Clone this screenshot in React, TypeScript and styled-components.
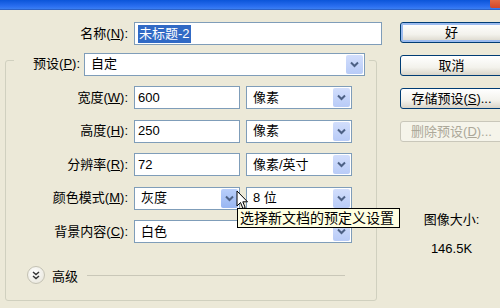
import React from 'react';
import styled, { createGlobalStyle } from 'styled-components';

const GlobalStyle = createGlobalStyle`
  html, body {
    margin: 0;
    padding: 0;
    background: #ece9d8;
    overflow: hidden;
  }
  body {
    font-family: "Liberation Sans", "Noto Sans CJK SC", sans-serif;
    font-size: 13px;
    color: #000;
  }
`;

const Window = styled.div`
  position: relative;
  width: 500px;
  height: 308px;
  overflow: hidden;
  display: flex;
  flex-direction: column;
  background: #ece9d8;
`;

const TitleBar = styled.div`
  height: 9px;
  flex-shrink: 0;
  display: flex;
  justify-content: flex-end;
  background: linear-gradient(#0b55d9, #2a6ef0 70%, #3b7ff2);
  border-bottom: 1px solid #2d63c9;
`;

const CloseBox = styled.div`
  width: 12px;
  height: 8px;
  margin-right: -2px;
  border-radius: 0 0 2px 2px;
  background: linear-gradient(#e26a44, #d2462a);
`;

const Body = styled.div`
  flex: 1;
  display: flex;
`;

const LeftPane = styled.div`
  width: 385px;
  flex-shrink: 0;
  padding-top: 12px;
`;

const RightPane = styled.div`
  padding: 12px 0 0 15px;
  display: flex;
  flex-direction: column;
  gap: 12px;
`;

const Row = styled.div`
  display: flex;
  align-items: center;
  gap: 6px;
  height: 23px;
`;

const Label = styled.label<{ $w: number }>`
  width: ${(p) => p.$w}px;
  flex-shrink: 0;
  text-align: right;
  line-height: 16px;
  white-space: nowrap;
`;

const Field = styled.div<{ $w: number }>`
  box-sizing: border-box;
  width: ${(p) => p.$w}px;
  height: 23px;
  border: 1px solid #7f9db9;
  background: #fff;
  display: flex;
  align-items: center;
  padding-left: 3px;
  line-height: 16px;
  white-space: nowrap;
`;

const Selected = styled.span`
  background: #316ac5;
  color: #fff;
  padding: 1px 1px;
`;

const SelectBox = styled(Field)`
  padding: 1px;
  padding-left: 0;
`;

const SelectText = styled.span`
  flex: 1;
  padding-left: 6px;
`;

const ArrowBtn = styled.span<{ $hot?: boolean }>`
  width: 17px;
  height: 19px;
  border-radius: 2px;
  display: flex;
  align-items: center;
  justify-content: center;
  background: ${(p) =>
    p.$hot ? 'linear-gradient(#b9cffb, #98b6f2)' : 'linear-gradient(#d2defc, #b8cbf7)'};
`;

const Group = styled.div`
  box-sizing: border-box;
  width: 372px;
  height: 241px;
  margin: 15px 0 0 5px;
  border: 1px solid #d0d0bf;
  border-radius: 3px;
`;

const PresetRow = styled(Row)`
  width: 355px;
  height: 22px;
  margin: -8px 0 0 8px;
  gap: 4px;
  background: #ece9d8;
`;

const Fields = styled.div`
  display: flex;
  flex-direction: column;
  gap: 10.5px;
  margin-top: 11px;
`;

const AdvancedRow = styled.div`
  display: flex;
  align-items: center;
  height: 18px;
  margin-top: 23px;
  padding-left: 21px;
  gap: 7px;
`;

const RoundBtn = styled.span`
  width: 16px;
  height: 16px;
  border-radius: 50%;
  border: 1px solid #c4c2b4;
  background: radial-gradient(circle at 40% 35%, #ffffff, #e4e2d6);
  display: flex;
  align-items: center;
  justify-content: center;
`;

const Rule = styled.span`
  flex: 1;
  height: 1px;
  margin: 0 31px 0 2px;
  background: #c9c7b8;
`;

const Button = styled.div<{ $default?: boolean; $disabled?: boolean }>`
  box-sizing: border-box;
  width: 103px;
  height: 21px;
  border-radius: 3px;
  border: 1px solid ${(p) => (p.$disabled ? '#c9c7ba' : '#003c74')};
  background: ${(p) =>
    p.$disabled ? '#f5f4ea' : 'linear-gradient(#ffffff, #f3f2ec 60%, #d9d5c9)'};
  box-shadow: ${(p) => (p.$default ? 'inset 0 0 0 2px #9bbbef' : 'none')};
  color: ${(p) => (p.$disabled ? '#aca899' : '#000')};
  display: flex;
  align-items: center;
  justify-content: center;
  line-height: 16px;
  white-space: nowrap;
`;

const Info = styled.div`
  width: 103px;
  margin-top: 58px;
  text-align: center;
  line-height: 16px;
`;

const InfoValue = styled.div`
  margin-top: 13px;
`;

const Tooltip = styled.div`
  position: absolute;
  left: 237px;
  top: 208px;
  height: 18px;
  padding: 0 5px 0 2px;
  border: 1px solid #000;
  background: #ffffe1;
  font-size: 14px;
  line-height: 18px;
  white-space: nowrap;
`;

const Cursor = styled.svg`
  position: absolute;
  left: 236px;
  top: 190px;
`;

const Chevron = () => (
  <svg width="9" height="7" viewBox="0 0 9 7">
    <path d="M1 1.5 L4.5 5 L8 1.5" fill="none" stroke="#4d6185" strokeWidth="2" />
  </svg>
);

const Select: React.FC<{ w: number; text: string; hot?: boolean }> = ({ w, text, hot }) => (
  <SelectBox $w={w}>
    <SelectText>{text}</SelectText>
    <ArrowBtn $hot={hot}>
      <Chevron />
    </ArrowBtn>
  </SelectBox>
);

const rows = [
  { label: '宽度', key: 'W', value: '600', unit: '像素' },
  { label: '高度', key: 'H', value: '250', unit: '像素' },
  { label: '分辨率', key: 'R', value: '72', unit: '像素/英寸' },
];

export default function App() {
  return (
    <>
      <GlobalStyle />
      <Window>
        <TitleBar>
          <CloseBox />
        </TitleBar>
        <Body>
          <LeftPane>
            <Row>
              <Label $w={128}>
                名称(<u>N</u>):
              </Label>
              <Field $w={248}>
                <Selected>未标题-2</Selected>
              </Field>
            </Row>
            <Group>
              <PresetRow>
                <Label $w={66}>
                  预设(<u>P</u>):
                </Label>
                <Select w={281} text="自定" />
              </PresetRow>
              <Fields>
                {rows.map((r) => (
                  <Row key={r.key}>
                    <Label $w={122}>
                      {r.label}(<u>{r.key}</u>):
                    </Label>
                    <Field $w={106}>{r.value}</Field>
                    <Select w={106} text={r.unit} />
                  </Row>
                ))}
                <Row>
                  <Label $w={122}>
                    颜色模式(<u>M</u>):
                  </Label>
                  <Select w={106} text="灰度" hot />
                  <Select w={106} text="8 位" />
                </Row>
                <Row>
                  <Label $w={122}>
                    背景内容(<u>C</u>):
                  </Label>
                  <Select w={218} text="白色" />
                </Row>
              </Fields>
              <AdvancedRow>
                <RoundBtn>
                  <svg width="8" height="9" viewBox="0 0 8 9">
                    <path
                      d="M1 1 L4 3.5 L7 1 M1 5 L4 7.5 L7 5"
                      fill="none"
                      stroke="#333"
                      strokeWidth="1.5"
                    />
                  </svg>
                </RoundBtn>
                <span>高级</span>
                <Rule />
              </AdvancedRow>
            </Group>
          </LeftPane>
          <RightPane>
            <Button $default>好</Button>
            <Button>取消</Button>
            <Button>
              存储预设(<u>S</u>)...
            </Button>
            <Button $disabled>
              删除预设(<u>D</u>)...
            </Button>
            <Info>
              <div>图像大小:</div>
              <InfoValue>146.5K</InfoValue>
            </Info>
          </RightPane>
        </Body>
        <Tooltip>选择新文档的预定义设置</Tooltip>
        <Cursor width="13" height="21" viewBox="0 0 13 21">
          <path
            d="M1 1 L1 16 L4.5 12.5 L7 18.5 L9.2 17.5 L6.8 11.8 L11.5 11.8 Z"
            fill="#fff"
            stroke="#000"
            strokeWidth="1"
            strokeLinejoin="round"
          />
        </Cursor>
      </Window>
    </>
  );
}
